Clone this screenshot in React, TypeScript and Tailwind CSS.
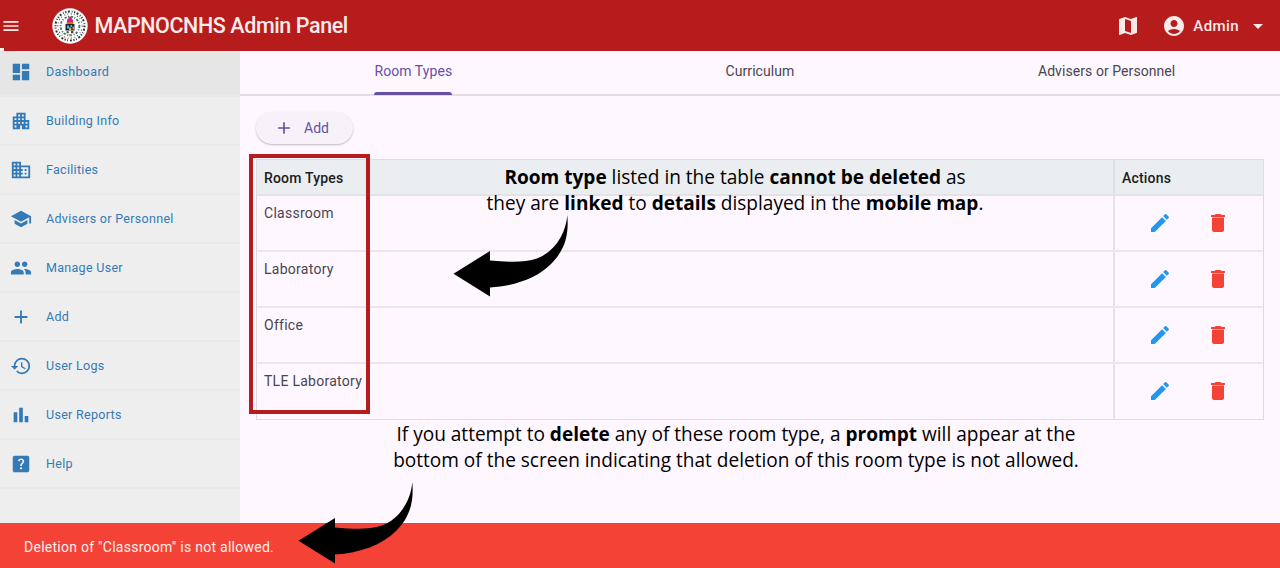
import type { ReactNode } from 'react';
import {
  MdDashboard, MdApartment, MdBusiness, MdSchool, MdPeople, MdAdd, MdHistory,
  MdHelpCenter, MdMap, MdAccountCircle, MdArrowDropDown, MdEdit, MdMenu,
} from 'react-icons/md';

function BarsIcon() {
  return (
    <svg viewBox="0 0 24 24" width="22" height="22" fill="currentColor">
      <path d="M4 9h4v11H4zM16 13h4v7h-4zM10 4h4v16h-4z" />
    </svg>
  );
}

function TrashIcon({ className }: { className: string }) {
  return (
    <svg viewBox="0 0 24 24" width="24" height="24" fill="currentColor" className={className}>
      <path d="M6 19c0 1.100.9 2 2 2h8c1.100 0 2-.9 2-2V7H6zM19 4h-3.500l-1-1h-5l-1 1H5v2h14z" />
      <path d="M6 6h12v1H6z" opacity="0.5" />
    </svg>
  );
}

function Seal() {
  return (
    <svg viewBox="0 0 36 36" className="h-9 w-9 shrink-0">
      <circle cx="18" cy="18" r="17.7" fill="#fff" />
      <circle cx="18" cy="18" r="14.5" fill="none" stroke="#333" strokeWidth="2" strokeDasharray="1.2 1.5 2 2 0.8 1.5" />
      <circle cx="18" cy="18" r="12.2" fill="none" stroke="#666" strokeWidth="1.2" strokeDasharray="0.9 2.6 1.3 2" />
      <circle cx="18" cy="18" r="9.4" fill="none" stroke="#2f7a55" strokeWidth="1.8" strokeDasharray="2.2 1.4 1 1.8" />
      <path d="M15 15v-3l3-4 3 4v3z" fill="#d51f91" />
      <path d="M14.6 14h6.8v2h-6.8z" fill="#e8622f" />
      <path d="M13.5 16h9v6.5h-9z" fill="#182433" />
      <path d="M15 17.5h2v3h-2zM18.6 17h1.4v2h-1.4z" fill="#58b9dd" />
      <path d="M17.2 19.4h2v3h-2zM20.6 18.6h1.2v3h-1.2z" fill="#f2c14a" />
      <path d="M14.5 23.2h2.2v2h-2.2zM19 23h2.4v2.2H19z" fill="#444" />
      <path d="M17 26h2.5v1.4H17z" fill="#d98a45" />
    </svg>
  );
}

function Arrow({ className }: { className: string }) {
  return (
    <svg viewBox="0 0 115 82" className={className}>
      <path d="M114.3 0C112.500 22 99 38 84 43.500C71 48 55 47 37 45.500V36L0.500 58.700L37 81.500V72.500C62 71 84 63 98 49C112 35 116 20 114.300 0Z" fill="#000" />
    </svg>
  );
}

const nav: { label: string; icon: ReactNode }[] = [
  { label: 'Dashboard', icon: <MdDashboard size={22} /> },
  { label: 'Building Info', icon: <MdApartment size={22} /> },
  { label: 'Facilities', icon: <MdBusiness size={22} /> },
  { label: 'Advisers or Personnel', icon: <MdSchool size={22} /> },
  { label: 'Manage User', icon: <MdPeople size={22} /> },
  { label: 'Add', icon: <MdAdd size={22} /> },
  { label: 'User Logs', icon: <MdHistory size={22} /> },
  { label: 'User Reports', icon: <BarsIcon /> },
  { label: 'Help', icon: <MdHelpCenter size={22} /> },
];

const rooms = ['Classroom', 'Laboratory', 'Office', 'TLE Laboratory'];

export default function App() {
  return (
    <div className="relative flex h-[568px] w-[1280px] flex-col overflow-hidden whitespace-nowrap bg-[#fef7ff] font-['Roboto',sans-serif]">
      <header className="flex h-[51px] shrink-0 items-center bg-[#b71c1c] text-[#fbeaea]">
        <MdMenu size={20} className="ml-[1px] shrink-0" />
        <div className="ml-[30.5px]"><Seal /></div>
        <h1 className="ml-[7px] text-[21.5px] font-medium leading-none tracking-[-0.41px]">MAPNOCNHS Admin Panel</h1>
        <div className="ml-auto flex items-center pr-[10px]">
          <MdMap size={24} />
          <MdAccountCircle size={24} className="ml-[22px]" />
          <span className="ml-[7px] pt-[2px] text-[15px] font-medium tracking-[0.4px]">Admin</span>
          <MdArrowDropDown size={24} className="ml-[7px]" />
        </div>
      </header>
      <div className="absolute left-0 top-[48px] h-[3px] w-1 bg-[#f3f1f1]" />

      <div className="flex min-h-0 flex-1">
        <aside className="w-60 shrink-0 bg-[#eeeeee]">
          {nav.map((n, i) => (
            <div
              key={n.label}
              className={
                i === 0
                  ? 'flex h-[46px] items-center border-b-2 border-[#e9e9e9] bg-[#e6e6e6] pb-[3px] pl-[10px] text-[#337ab7]'
                  : 'flex h-[49px] items-center border-b-2 border-[#e9e9e9] pl-[10px] text-[#337ab7]'
              }
            >
              {n.icon}
              <span className="ml-[14px] pt-px text-[12.5px] tracking-[0.3px]">{n.label}</span>
            </div>
          ))}
        </aside>

        <main className="flex-1">
          <div className="grid h-[45px] grid-cols-3 border-b-2 border-[#e3dce6] text-sm tracking-[0.07px] text-[#49454f]">
            <div className="flex justify-center">
              <div className="flex h-[45px] flex-col items-center text-[#6750a4]">
                <span className="flex h-[39px] items-center">Room Types</span>
                <span className="mt-[2px] h-[3px] w-[78px] rounded-t-[3px] bg-[#6750a4]" />
              </div>
            </div>
            <div className="flex h-[39px] items-center justify-center">Curriculum</div>
            <div className="flex h-[39px] items-center justify-center">Advisers or Personnel</div>
          </div>

          <div className="pl-4 pt-4">
            <button className="flex h-8 w-[97px] items-center rounded-full bg-[#f7f2fa] pl-[18px] text-sm text-[#6750a4] shadow-[0_1px_2px_rgba(0,0,0,0.25)]">
              <MdAdd size={20} />
              <span className="ml-[10px]">Add</span>
            </button>
          </div>

          <div className="ml-4 mt-[15px] w-[1008px] border border-[#dfdce1] text-sm text-[#49454f]">
            <div className="flex h-9 border-b-2 border-[#e3e3e6] bg-[#eaeef0] font-medium tracking-[0.18px] text-[#1d1b20]">
              <div className="flex flex-1 items-center pl-[7px] pt-px">Room Types</div>
              <div className="flex w-[150px] items-center border-l-2 border-[#e2e0e4] pl-[7px] pt-px">Actions</div>
            </div>
            {rooms.map((r) => (
              <div key={r} className="flex h-14 border-b-2 border-[#ebe5ed] last:h-[55px] last:border-b-0">
                <div className="flex-1 pl-[7px] pt-[7px] tracking-[0.27px]">{r}</div>
                <div className="flex w-[150px] items-start border-l-2 border-[#e7e1e9] pl-[33px] pt-[15px]">
                  <MdEdit size={24} className="text-[#2196f3]" />
                  <TrashIcon className="ml-[34px] text-[#f44336]" />
                </div>
              </div>
            ))}
          </div>
        </main>
      </div>

      <footer className="flex h-[45px] shrink-0 items-center bg-[#f44336] pl-6 pt-[3px] text-sm tracking-[0.26px] text-[#fff0ef]">
        Deletion of "Classroom" is not allowed.
      </footer>

      <div className="absolute left-[249px] top-[154px] h-[260px] w-[121px] border-4 border-[#b71c1c]" />
      <p className="absolute left-[435px] top-[164px] w-[600px] text-center font-['Open_Sans',sans-serif] text-[19.060px] leading-[26px] text-black">
        <b>Room type</b> listed in the table <b>cannot be deleted</b> as<br />
        they are <b>linked</b> to <b>details</b> displayed in the <b>mobile map</b>.
      </p>
      <p className="absolute left-[386px] top-[421px] w-[700px] text-center font-['Open_Sans',sans-serif] text-[19.060px] leading-[26px] text-black">
        If you attempt to <b>delete</b> any of these room type, a <b>prompt</b> will appear at the<br />
        bottom of the screen indicating that deletion of this room type is not allowed.
      </p>
      <Arrow className="absolute left-[453px] top-[215px] h-[82px] w-[115px]" />
      <Arrow className="absolute left-[298px] top-[482px] h-[82px] w-[115px]" />
    </div>
  );
}
